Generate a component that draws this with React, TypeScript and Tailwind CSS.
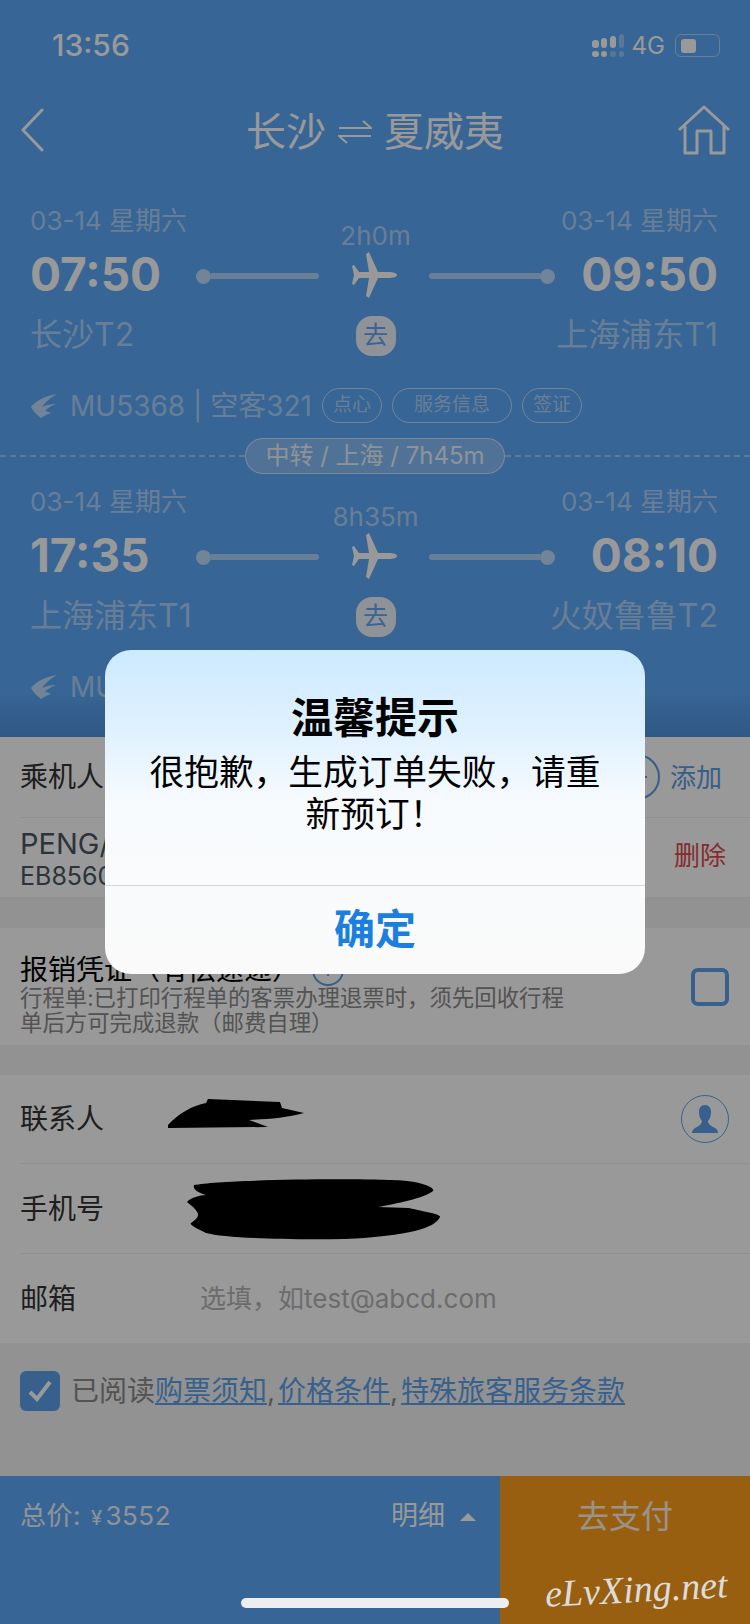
const FONT = "font-['Inter','Noto_Sans_CJK_SC',sans-serif]";

function SignalIcon() {
  return (
    <svg width="34" height="24" viewBox="0 0 34 24" fill="#ffffff">
      <rect x="1" y="6" width="7" height="8" rx="3" />
      <rect x="10" y="4" width="6" height="10" rx="3" />
      <rect x="19" y="2" width="6" height="12" rx="3" />
      <rect x="28" y="0" width="5" height="14" rx="2.5" opacity="0.35" />
      <rect x="1" y="17" width="7" height="6" rx="3" />
      <rect x="10" y="17" width="6" height="6" rx="3" />
      <rect x="19" y="17" width="6" height="6" rx="3" opacity="0.35" />
      <rect x="28" y="17" width="5" height="6" rx="2.5" opacity="0.35" />
    </svg>
  );
}

function PlaneIcon() {
  return (
    <svg width="46" height="46" viewBox="0 0 46 46" fill="#ffffff">
      <path d="M46 23C46 21 42 20 38 20L27 20L18 0L15 2L18 20L8 20L3 13L1 14L3 23L1 32L3 33L8 26L18 26L15 44L18 46L27 26L38 26C42 26 46 25 46 23Z" />
    </svg>
  );
}

function AirlineLogo() {
  return (
    <svg width="30" height="26" viewBox="0 0 30 26" fill="#ffffff" fillOpacity="0.6">
      <path d="M1 14C5 9 13 3 27 1C20 5 15 9 12 14C16 12 21 11 26 11C21 13 17 15 15 18C17 18 19 19 21 20C17 21 14 23 11 25C7 22 3 18 1 14Z" />
    </svg>
  );
}

function Flight({
  leftTime,
  rightTime,
  duration,
  from,
  to,
}: {
  leftTime: string;
  rightTime: string;
  duration: string;
  from: string;
  to: string;
}) {
  return (
    <div className="flex">
      <div className="w-[166px] shrink-0 whitespace-nowrap">
        <div className="h-8 pt-px text-[26px] leading-8 text-white/50">03-14 星期六</div>
        <div className="mt-[10px] h-14 text-[46px] font-bold leading-[56px] text-white">{leftTime}</div>
        <div className="mt-3 h-10 pt-px text-[32px] leading-10 text-white/50">{from}</div>
      </div>
      <div className="flex w-[359px] shrink-0 flex-col items-center">
        <div className="mt-[17px] h-[30px] text-[26px] leading-[30px] text-white/50">{duration}</div>
        <div className="mt-px flex h-[46px] w-full items-center justify-between">
          <div className="mt-[2px] flex w-[123px] items-center">
            <div className="h-[15px] w-[15px] rounded-full bg-white/60" />
            <div className="h-[6px] flex-1 rounded-r-full bg-white/50" />
          </div>
          <PlaneIcon />
          <div className="mt-[2px] flex w-[126px] items-center">
            <div className="h-[6px] flex-1 rounded-l-full bg-white/50" />
            <div className="h-[15px] w-[15px] rounded-full bg-white/60" />
          </div>
        </div>
        <div className="mt-[18px] flex h-10 w-10 items-center justify-center rounded-2xl bg-white/90 text-[25px] text-[#5da8f8]">
          去
        </div>
      </div>
      <div className="flex w-[163px] shrink-0 flex-col items-end whitespace-nowrap">
        <div className="h-8 pt-px text-[26px] leading-8 text-white/50">03-14 星期六</div>
        <div className="mt-[10px] h-14 text-[46px] font-bold leading-[56px] text-white">{rightTime}</div>
        <div className="mt-3 h-10 pt-px text-[32px] leading-10 text-white/50">{to}</div>
      </div>
    </div>
  );
}

function Tag({ label, width }: { label: string; width: string }) {
  return (
    <div className={`flex h-[35px] items-center justify-center rounded-[18px] border border-white/60 text-[19px] text-white/50 ${width}`}>
      {label}
    </div>
  );
}

export default function App() {
  return (
    <div className={`relative flex h-[1624px] w-[750px] flex-col overflow-hidden bg-[#f3f3f3] ${FONT}`}>
      <div className="h-[737px] shrink-0 bg-[linear-gradient(to_bottom,#5da8f8_0%,#5da8f8_94%,#4f93dd_100%)]">
        <div className="flex h-[90px] items-center justify-between pl-[52px] pr-[30px] pt-px">
          <span className="text-[30px] font-medium text-white">13:56</span>
          <div className="flex items-center gap-[7px]">
            <SignalIcon />
            <span className="text-[24px] text-white">4G</span>
            <div className="ml-[3px] flex h-[23px] w-[45px] items-center rounded-md border border-white/50 px-[5px]">
              <div className="h-[14px] w-[15px] rounded-[3px] bg-white" />
            </div>
          </div>
        </div>
        <div className="flex h-[80px] items-center justify-between px-[20px]">
          <div className="w-[60px]">
            <svg width="24" height="44" viewBox="0 0 24 44" fill="none" stroke="#ffffff" strokeWidth="3" strokeLinecap="round" strokeLinejoin="round">
              <path d="M22 2L3 22L22 42" />
            </svg>
          </div>
          <div className="flex items-center gap-3 pt-[3px] text-[40px] text-white">
            <span>长沙</span>
            <svg width="34" height="28" viewBox="0 0 34 28" fill="none" stroke="#ffffff" strokeWidth="2">
              <path d="M1 10H33L25 3" />
              <path d="M33 18H1L9 25" />
            </svg>
            <span>夏威夷</span>
          </div>
          <div className="flex w-[60px] justify-end">
            <svg width="52" height="50" viewBox="0 0 52 50" fill="none" stroke="#ffffff" strokeWidth="3" strokeLinejoin="round">
              <path d="M1 25L26 2L51 25" />
              <path d="M7 21V48H19V26H33V48H46V21" />
            </svg>
          </div>
        </div>

        <div className="pl-[30px] pr-[32px] pt-[34px]">
          <Flight leftTime="07:50" rightTime="09:50" duration="2h0m" from="长沙T2" to="上海浦东T1" />
          <div className="mt-8 flex h-[35px] items-center">
            <AirlineLogo />
            <span className="ml-[10px] whitespace-nowrap text-[28px] text-white/50">MU5368 | 空客321</span>
            <div className="ml-[10px] flex gap-[10px]">
              <Tag label="点心" width="w-[60px]" />
              <Tag label="服务信息" width="w-[120px]" />
              <Tag label="签证" width="w-[60px]" />
            </div>
          </div>
        </div>

        <div className="mt-[15px] flex h-9 items-center">
          <div className="flex-1 border-t-2 border-dashed border-white/40" />
          <div className="flex h-9 w-[260px] items-center justify-center rounded-[18px] border border-white/60 bg-white/25 text-[24px] text-white/85">
            中转 / 上海 / 7h45m
          </div>
          <div className="flex-1 border-t-2 border-dashed border-white/40" />
        </div>

        <div className="pl-[30px] pr-[32px] pt-[11px]">
          <Flight leftTime="17:35" rightTime="08:10" duration="8h35m" from="上海浦东T1" to="火奴鲁鲁T2" />
          <div className="mt-8 flex h-[35px] items-center">
            <AirlineLogo />
            <span className="ml-[10px] text-[28px] text-white/50">MU</span>
          </div>
        </div>
      </div>

      <div className="bg-white pl-[20px]">
        <div className="flex h-[81px] items-center border-b border-[#eeeeee] pr-[28px]">
          <span className="flex-1 text-[28px] text-[#333333]">乘机人</span>
          <div className="flex h-[46px] w-[46px] items-center justify-center rounded-full border-2 border-[#5c9ce6]">
            <svg width="20" height="20" viewBox="0 0 20 20" stroke="#5c9ce6" strokeWidth="2">
              <path d="M0 10H20M10 0V20" />
            </svg>
          </div>
          <span className="ml-[10px] text-[26px] text-[#5c9ce6]">添加</span>
        </div>
        <div className="flex h-[79px] items-center justify-between pr-[24px]">
          <div className="text-[#4b5563]">
            <div className="text-[29px] leading-[36px]">PENG/</div>
            <div className="text-[25px] leading-[28px]">EB8560</div>
          </div>
          <span className="pb-1 text-[26px] text-[#e0484d]">删除</span>
        </div>
      </div>

      <div className="mt-[31px] flex h-[117px] bg-white pl-[20px] pr-[21px]">
        <div className="flex-1 pt-[27px]">
          <div className="flex h-[30px] items-center text-[28px] leading-[30px] text-black">
            报销凭证（有偿速递）
            <div className="ml-3 flex h-8 w-8 items-center justify-center rounded-full border-2 border-[#5c9ce6] text-[18px] text-[#5c9ce6]">
              i
            </div>
          </div>
          <div className="text-[22.4px] leading-[25px] text-[#8a8a8a]">
            行程单:已打印行程单的客票办理退票时，须先回收行程
            <br />
            单后方可完成退款（邮费自理）
          </div>
        </div>
        <div className="h-[38px] w-[38px] self-center rounded-[7px] border-4 border-[#5da2ea]" />
      </div>

      <div className="mt-[30px] bg-white pl-[20px]">
        <div className="flex h-[89px] items-center border-b border-[#eeeeee] pr-[21px]">
          <span className="w-[147px] text-[28px] text-[#333333]">联系人</span>
          <svg width="138" height="32" viewBox="0 0 138 32" fill="#000000" className="mb-[10px]">
            <path d="M1 27C12 15 25 8 39 5L41 1L113 4L115 10L137 15C120 20 100 21 82 22L101 29L1 30Z" />
          </svg>
          <div className="ml-auto flex h-12 w-12 items-center justify-center rounded-full border border-[#5da2ea]">
            <svg width="30" height="30" viewBox="0 0 30 30" fill="#5da2ea">
              <path d="M15 1C11 1 9 4 9 8C9 12 10 15 12 17C12 20 9 22 5 24C3 25 2 27 2 29H28C28 27 27 25 25 24C21 22 18 20 18 17C20 15 21 12 21 8C21 4 19 1 15 1Z" />
            </svg>
          </div>
        </div>
        <div className="flex h-[90px] items-center border-b border-[#eeeeee]">
          <span className="w-[165px] text-[28px] text-[#333333]">手机号</span>
          <svg width="256" height="62" viewBox="0 0 256 62" fill="#000000">
            <path d="M9 7C40 1 190 0 222 3C240 5 250 10 248 13C240 20 210 26 193 29L224 30C240 34 256 36 255 39C250 50 225 58 159 61C100 62 40 60 21 55C10 50 4 46 6 45C16 38 16 35 2 24C5 20 15 17 21 17C10 14 8 10 9 7Z" />
          </svg>
        </div>
        <div className="flex h-[89px] items-center">
          <span className="w-[180px] text-[28px] text-[#333333]">邮箱</span>
          <span className="text-[26px] text-[#b5b5b5]">选填，如test@abcd.com</span>
        </div>
      </div>

      <div className="flex flex-1 items-start pl-[20px] pt-[28px]">
        <div className="flex h-10 w-10 items-center justify-center rounded-[6px] bg-[#5da2ea]">
          <svg width="26" height="24" viewBox="0 0 26 24" fill="none" stroke="#ffffff" strokeWidth="4">
            <path d="M3 13L10 20L23 3" />
          </svg>
        </div>
        <div className="ml-[11px] mt-[1px] flex whitespace-nowrap text-[28px] leading-[38px] text-[#8a8a8a]">
          已阅读
          <span className="text-[#5da2ea] underline">购票须知</span>
          <span className="w-[11px]">,</span>
          <span className="text-[#5da2ea] underline">价格条件</span>
          <span className="w-[11px]">,</span>
          <span className="text-[#5da2ea] underline">特殊旅客服务条款</span>
        </div>
      </div>

      <div className="flex h-[148px] shrink-0">
        <div className="flex h-full w-[500px] items-start bg-[#5da8f8] pl-[20px] pr-[24px] pt-[21px]">
          <span className="text-[26px] leading-[38px] tracking-[0.5px] text-white/90">
            总价:
            <span className="ml-[10px] text-[20px]">¥</span>
            <span className="ml-[3px]">3552</span>
          </span>
          <span className="ml-auto text-[27px] leading-[38px] text-white">明细</span>
          <svg width="16" height="8" viewBox="0 0 16 8" fill="#ffffff" className="ml-[15px] mt-[16px]">
            <path d="M8 0L16 8H0Z" />
          </svg>
        </div>
        <div className="flex-1 bg-[#ff9e1b] pt-5 text-center text-[32px] leading-[42px] text-white/90">去支付</div>
      </div>

      <div className="absolute inset-0 bg-black/40" />

      <div className="absolute left-[105px] top-[650px] flex h-[324px] w-[540px] flex-col overflow-hidden rounded-[26px] bg-[linear-gradient(to_bottom,#cdeaff_0%,#dff1ff_25%,#f8fbfe_48%,#fafafa_100%)]">
        <div className="flex h-[236px] flex-col items-center border-b border-[#d6d6d6] px-10 pt-[44px] text-center">
          <div className="h-12 text-[42px] font-bold leading-[48px] text-black">温馨提示</div>
          <div className="mt-[9px] text-[34.7px] leading-[42px] text-black">很抱歉，生成订单失败，请重新预订！</div>
        </div>
        <div className="flex flex-1 items-center justify-center text-[41px] font-bold text-[#1b7fe0]">确定</div>
      </div>

      <div className="absolute bottom-[16px] left-[241px] h-[10px] w-[268px] rounded-full bg-[#eceef0]" />
      <div className="absolute bottom-[6px] left-[545px] -rotate-3 font-['Liberation_Serif',serif] text-[38px] italic text-[#dcdcdc]">
        eLvXing.net
      </div>
    </div>
  );
}
